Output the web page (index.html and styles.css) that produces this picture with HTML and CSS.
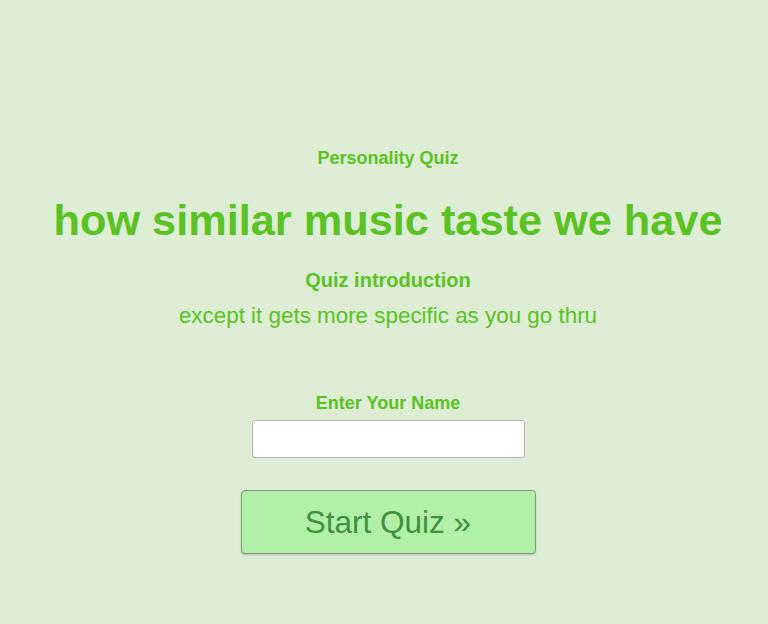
FILE: index.html
```html
<!DOCTYPE html>
<html>
<head>
<meta charset="utf-8">
<link rel="stylesheet" href="styles.css">
</head>
<body>
<main class="quiz">
  <p class="kicker">Personality Quiz</p>
  <h1 class="title">how similar music taste we have</h1>
  <h2 class="intro-head">Quiz introduction</h2>
  <p class="intro">except it gets more specific as you go thru</p>
  <label class="name-label" for="name">Enter Your Name</label>
  <input class="name-input" id="name" type="text">
  <button class="start">Start Quiz »</button>
</main>
</body>
</html>
```
FILE: styles.css
```css
html, body {
  margin: 0;
  padding: 0;
  background: #ddeed5;
  height: 100%;
}
body {
  font-family: "Liberation Sans", Arial, sans-serif;
  color: #5bc224;
}
.quiz {
  display: flex;
  flex-direction: column;
  align-items: center;
  padding: 147px 0 0 8px;
}
.kicker {
  margin: 0;
  font-size: 18px;
  font-weight: bold;
  line-height: 22px;
}
.title {
  margin: 26px 0 0;
  font-size: 43.3px;
  line-height: 50px;
  font-weight: bold;
}
.intro-head {
  margin: 23px 0 0;
  font-size: 20px;
  line-height: 24px;
  font-weight: bold;
}
.intro {
  margin: 11px 0 0;
  font-size: 22.4px;
  line-height: 26px;
}
.name-label {
  margin-top: 63px;
  font-size: 18px;
  font-weight: bold;
  line-height: 22px;
}
.name-input {
  margin-top: 6px;
  box-sizing: border-box;
  width: 273px;
  height: 38px;
  border: 1px solid #b3b3b3;
  border-radius: 3px;
  background: #fff;
}
.start {
  margin-top: 32px;
  box-sizing: border-box;
  width: 295px;
  height: 64px;
  background: #b2f0aa;
  border: 1px solid #7d9c7a;
  border-radius: 4px;
  box-shadow: 0 1px 2px rgba(0,0,0,0.2);
  color: #40903e;
  font-family: "Liberation Sans", Arial, sans-serif;
  font-size: 31.5px;
}
```
